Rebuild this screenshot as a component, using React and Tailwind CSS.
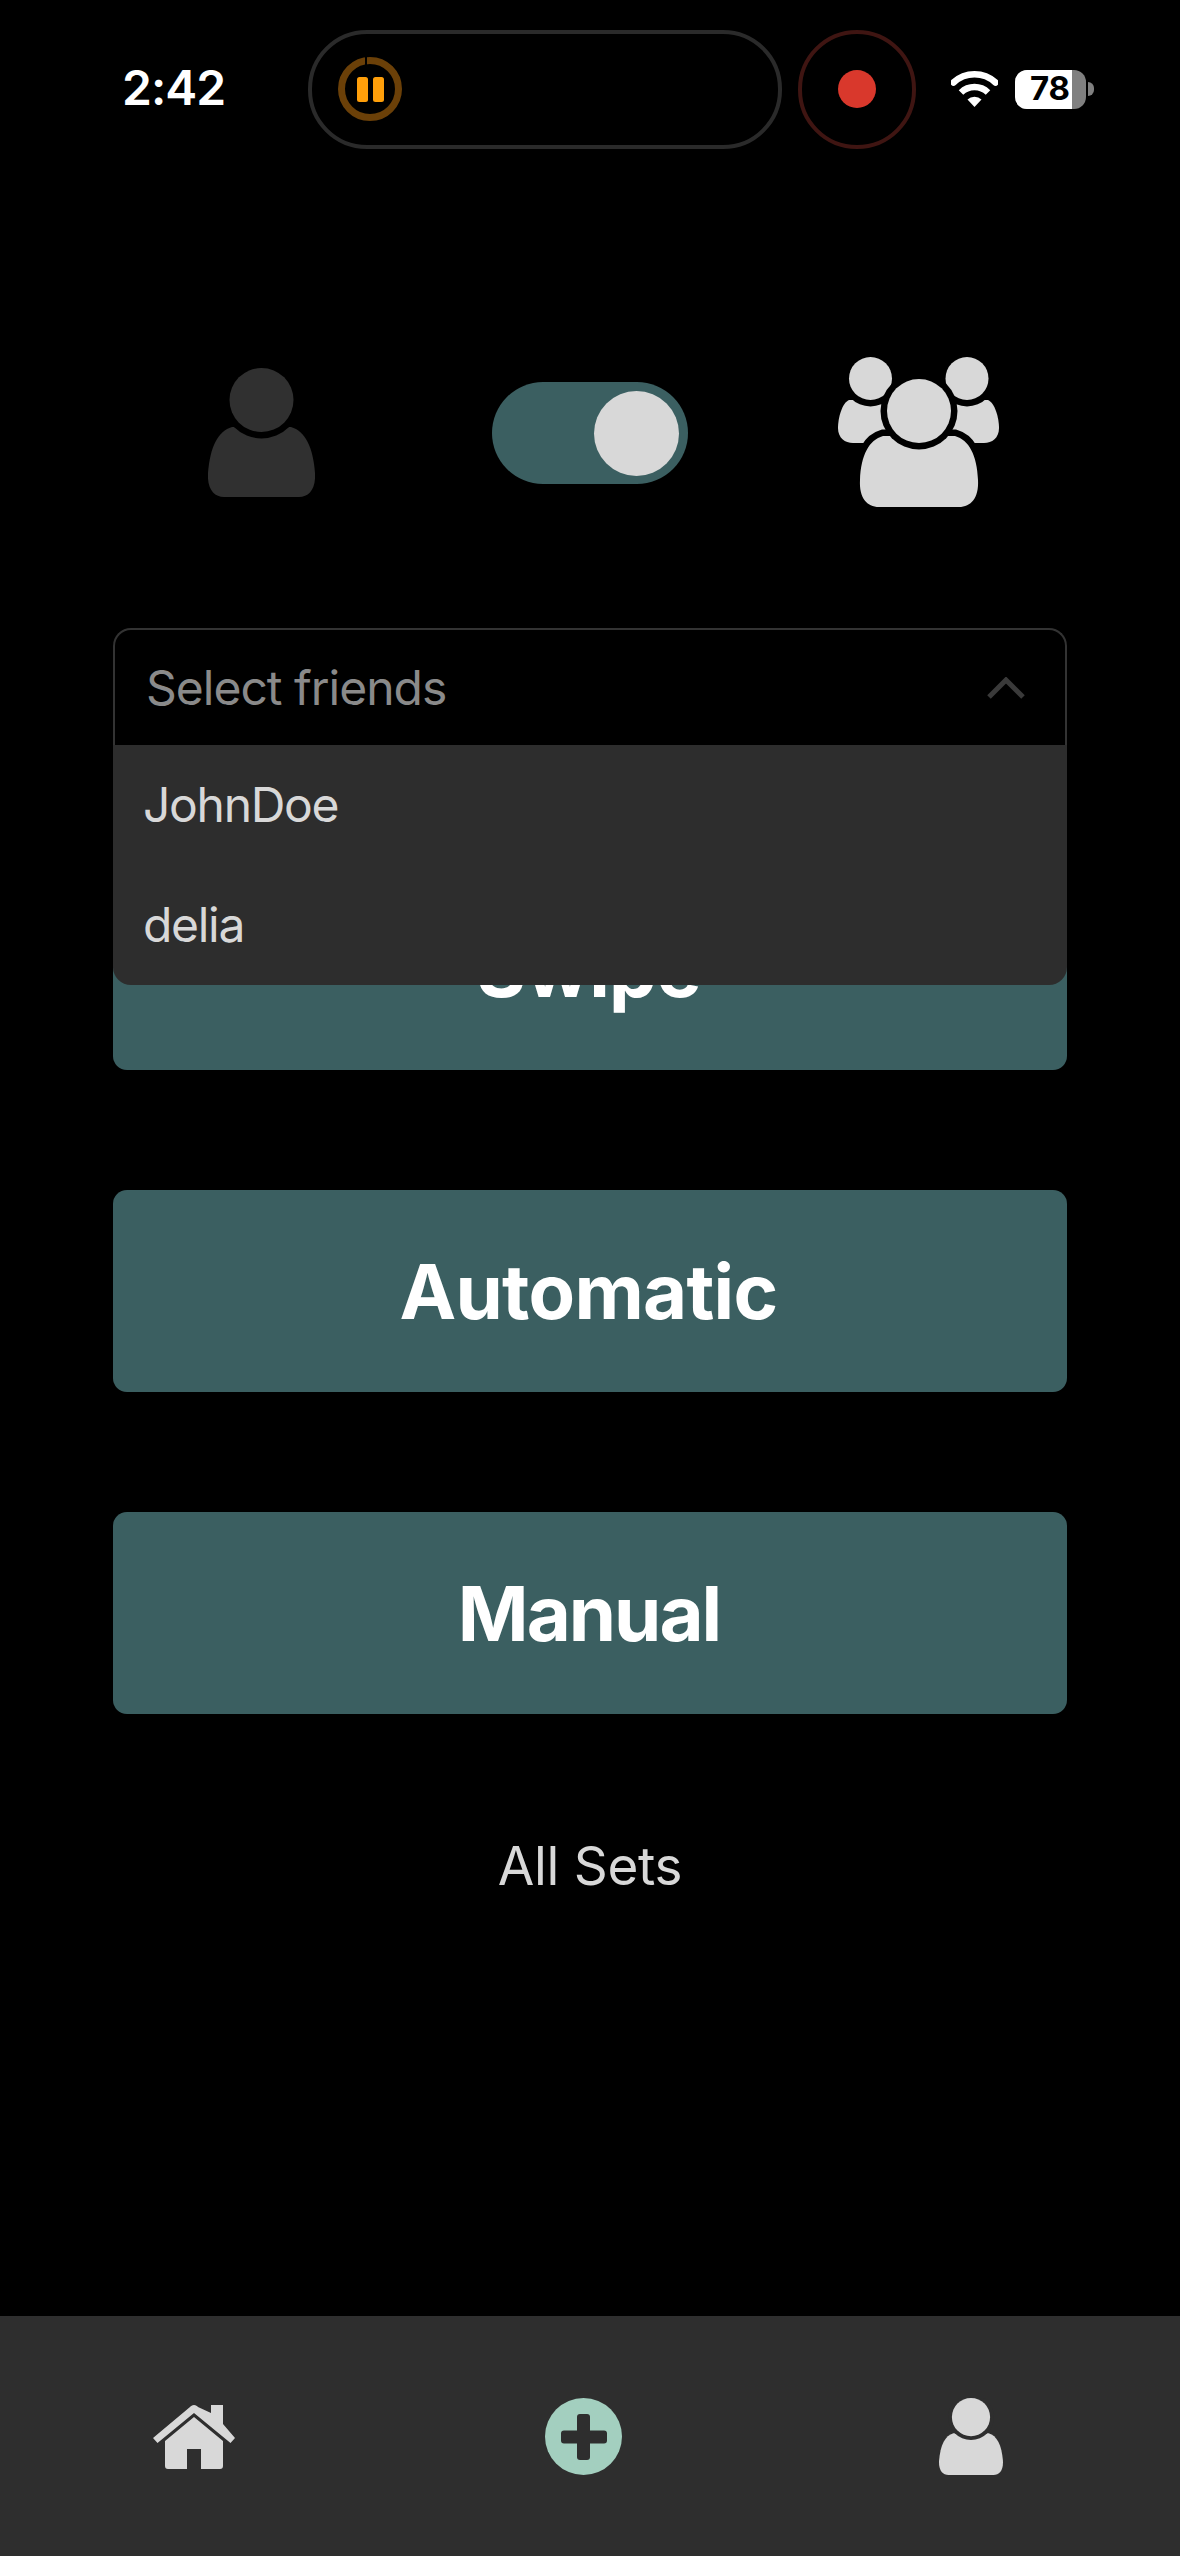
const BODY = "M24 0C10 4 2 20 0 46C-1 62 6 70 16 70L91 70C101 70 108 62 107 46C105 20 97 4 83 0Z";

function Person({ className, fill, halo }) {
  return (
    <svg viewBox="0 0 107 129" className={className}>
      <g transform="translate(0 59)"><path d={BODY} fill={fill} /></g>
      <circle cx="53.5" cy="32" r="38.5" fill={halo} />
      <circle cx="53.5" cy="32" r="32" fill={fill} />
    </svg>
  );
}

function Group() {
  const f = "#d8d8d8";
  return (
    <svg viewBox="837 357 161 150" className="w-[161px] h-[150px]">
      <path d="M848 400C841 403 837 418 837 428C837 438 844 443 852 443L890 443L890 400Z" fill={f} />
      <path d="M987 400C994 403 998 418 998 428C998 438 991 443 983 443L945 443L945 400Z" fill={f} />
      <circle cx="869.5" cy="378.5" r="28" fill="#000" />
      <circle cx="966" cy="378.5" r="28" fill="#000" />
      <circle cx="869.5" cy="378.5" r="21.5" fill={f} />
      <circle cx="966" cy="378.5" r="21.5" fill={f} />
      <path
        d="M882 436C868 440 860 455 859 480C858 498 866 507 878 507L958 507C970 507 978 498 977 480C976 455 968 440 954 436Z"
        fill={f}
        stroke="#000"
        strokeWidth="13"
        paintOrder="stroke"
      />
      <circle cx="918" cy="411" r="38.5" fill="#000" />
      <circle cx="918" cy="411" r="32" fill={f} />
    </svg>
  );
}

function Home() {
  const f = "#d8d8d8";
  return (
    <svg viewBox="153 2404 82 65" className="w-[82px] h-[65px]">
      <path d="M194 2405C192 2405 191 2406 190 2407L153 2438L157.5 2443L194 2413L230.5 2443L235 2438L223 2424L223 2405L211 2405L211 2413L198 2407C197 2406 196 2405 194 2405Z" fill={f} />
      <path d="M194 2417L223 2441L223 2466C223 2468 222 2469 220 2469L201 2469L201 2449L187 2449L187 2469L168 2469C166 2469 165 2468 165 2466L165 2441Z" fill={f} />
    </svg>
  );
}

function Plus() {
  return (
    <svg viewBox="0 0 77 77" className="w-[77px] h-[77px]">
      <circle cx="38.5" cy="38.5" r="38.5" fill="#a3cfbf" />
      <rect x="32" y="16" width="13" height="46" rx="3" fill="#2e2e2e" />
      <rect x="16" y="32.5" width="46" height="13" rx="3" fill="#2e2e2e" />
    </svg>
  );
}

function Wifi() {
  return (
    <svg viewBox="0 0 47 36" className="w-[47px] h-[36px]">
      <path d="M23.5 36L16.5 28.5A10 10 0 0 1 30.5 28.5Z" fill="#fff" />
      <path d="M10 21.5A19.5 19.5 0 0 1 37 21.5" fill="none" stroke="#fff" strokeWidth="6.5" />
      <path d="M2.5 11.5A31 31 0 0 1 44.5 11.5" fill="none" stroke="#fff" strokeWidth="6.5" strokeLinecap="round" />
    </svg>
  );
}

function ModeButton({ label, extra }) {
  return (
    <button className={`w-full h-[202px] rounded-[14px] bg-[#3b5f61] text-white text-[76px] font-bold flex items-center justify-center ${extra}`}>
      {label}
    </button>
  );
}

export default function App() {
  return (
    <div className="w-[1180px] h-[2556px] bg-black flex flex-col font-[Inter,sans-serif] overflow-hidden">
      <div className="h-[178px] flex items-center shrink-0">
        <span className="ml-[122px] w-[104px] text-white text-[48px] font-semibold tracking-[-1px] pb-[3px]">2:42</span>
        <div className="ml-[82px] w-[474px] h-[119px] rounded-[59px] border-4 border-[#2a2a2a] flex items-center pl-[26px]">
          <svg viewBox="0 0 64 64" className="w-[64px] h-[64px]">
            <circle cx="32" cy="32" r="28.5" fill="none" stroke="#6b4008" strokeWidth="7" />
            <rect x="27" y="0" width="2" height="8" fill="#000" />
            <rect x="19" y="20" width="11" height="25" rx="2.5" fill="#ff9f0a" />
            <rect x="35" y="20" width="11" height="25" rx="2.5" fill="#ff9f0a" />
          </svg>
        </div>
        <div className="ml-[16px] w-[118px] h-[119px] rounded-full border-4 border-[#3f1512] flex items-center justify-center">
          <div className="w-[38px] h-[38px] rounded-full bg-[#d9382c]" />
        </div>
        <div className="ml-[35px]"><Wifi /></div>
        <div className="ml-[17px] w-[71px] h-[39px] rounded-[12px] overflow-hidden relative flex bg-[#808080]">
          <div className="w-[57px] h-full bg-white" />
          <span className="absolute left-0 top-0 w-[71px] h-full flex items-center justify-center text-black text-[33px] font-bold pr-[1px]">78</span>
        </div>
        <div className="ml-[2px] w-[6px] h-[14px] rounded-r-full bg-[#808080]" />
      </div>

      <div className="mt-[179px] px-[97px] grid grid-cols-3 items-center h-[150px] shrink-0">
        <div className="flex justify-center">
          <Person className="w-[107px] h-[129px]" fill="#303030" halo="#000" />
        </div>
        <div className="flex justify-center pt-[2px]">
          <div className="w-[196px] h-[102px] rounded-full bg-[#3b5f61] flex items-center justify-end pr-[9px]">
            <div className="w-[85px] h-[85px] rounded-full bg-[#d8d8d8]" />
          </div>
        </div>
        <div className="flex justify-center"><Group /></div>
      </div>

      <div className="mt-[121px] mx-[113px] flex flex-col">
        <div className="relative z-10 h-[117px] rounded-t-[18px] border-2 border-b-0 border-[#333333] flex items-center justify-between pl-[31px] pr-[40px] shrink-0">
          <span className="text-[48px] text-[#8a8a8a] tracking-[-1px]">Select friends</span>
          <svg viewBox="0 0 38 22" className="w-[38px] h-[22px]">
            <path d="M2 20L19 3L36 20" fill="none" stroke="#3a3a3a" strokeWidth="5" />
          </svg>
          <div className="absolute left-[-2px] right-[-2px] top-[115px] h-[240px] bg-[#2d2d2d] rounded-b-[18px] text-[48px] text-[#d8d8d8] tracking-[-1.3px]">
            <div className="h-[120px] flex items-center pl-[30px]">JohnDoe</div>
            <div className="h-[120px] flex items-center pl-[30px]">delia</div>
          </div>
        </div>
        <div className="mt-[123px] flex flex-col gap-[120px]">
          <ModeButton label="Swipe" extra="tracking-[-0.7px] pr-[3px]" />
          <ModeButton label="Automatic" extra="tracking-[-0.7px] pr-[3px]" />
          <ModeButton label="Manual" extra="tracking-[-2px] pr-[2px]" />
        </div>
        <div className="mt-[113px] text-center text-[53px] text-[#d8d8d8] tracking-[-0.3px]">All Sets</div>
      </div>

      <div className="mt-auto h-[240px] bg-[#2e2e2e] flex items-start pt-[82px] pl-[153px] shrink-0">
        <div className="mt-[6px]"><Home /></div>
        <div className="ml-[310px]"><Plus /></div>
        <div className="ml-[317px]">
          <Person className="w-[64px] h-[77px]" fill="#d8d8d8" halo="#2e2e2e" />
        </div>
      </div>
    </div>
  );
}
